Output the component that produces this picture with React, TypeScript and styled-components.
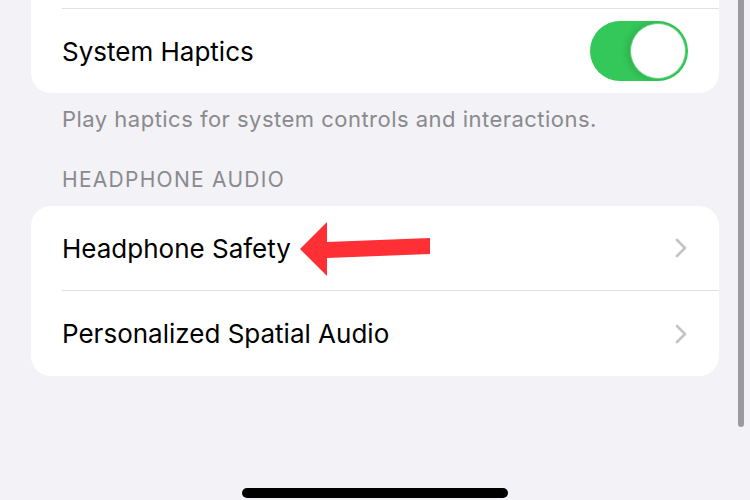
import styled, { createGlobalStyle } from 'styled-components';

const GlobalStyle = createGlobalStyle`
  html, body {
    margin: 0;
    padding: 0;
    background: #f2f2f7;
    overflow: hidden;
  }
  body {
    font-family: Inter, "Liberation Sans", sans-serif;
    -webkit-font-smoothing: antialiased;
  }
`;

const Screen = styled.div`
  position: relative;
  width: 750px;
  height: 500px;
  overflow: hidden;
  background: #f2f2f7;
`;

const Content = styled.div`
  display: flex;
  flex-direction: column;
  padding: 0 31px;
  margin-top: -40px;
`;

const Card = styled.div<{ $gap?: number }>`
  background: #ffffff;
  border-radius: 20px;
  overflow: hidden;
  margin-top: ${(p) => p.$gap ?? 0}px;
`;

const Row = styled.div<{ $height: number }>`
  display: flex;
  align-items: center;
  justify-content: space-between;
  height: ${(p) => p.$height}px;
  padding: 0 31px;
  box-sizing: border-box;
`;

const Separator = styled.div`
  height: 1px;
  margin-left: 31px;
  background: #e1e1e4;
`;

const Label = styled.span`
  font-size: 26px;
  color: #000000;
  letter-spacing: 0;
`;

const Footer = styled.div`
  margin-top: 10px;
  padding-left: 31px;
  font-size: 22px;
  line-height: 32px;
  color: #8a8a8e;
  letter-spacing: 0.48px;
`;

const SectionHeader = styled.div`
  margin-top: 31px;
  padding-left: 31px;
  font-size: 21px;
  line-height: 28px;
  color: #8a8a8e;
  letter-spacing: 1.28px;
  text-transform: uppercase;
`;

const Toggle = styled.div`
  position: relative;
  width: 98px;
  height: 60px;
  border-radius: 30px;
  background: #34c759;
  flex-shrink: 0;
`;

const Knob = styled.div`
  position: absolute;
  top: 2px;
  right: 2px;
  width: 56px;
  height: 56px;
  box-sizing: border-box;
  border-radius: 50%;
  background: #ffffff;
  border: 1px solid #5fd37d;
  box-shadow: -3px 0 6px rgba(0, 0, 0, 0.12);
`;

const ScrollIndicator = styled.div`
  position: absolute;
  top: -10px;
  right: 6px;
  width: 6px;
  height: 437px;
  border-radius: 3px;
  background: #9b9b9d;
`;

const HomeIndicator = styled.div`
  position: absolute;
  bottom: 2px;
  left: 242px;
  width: 266px;
  height: 10px;
  border-radius: 5px;
  background: #000000;
`;

const Annotation = styled.svg`
  position: absolute;
  left: 296px;
  top: 218px;
`;

function Chevron() {
  return (
    <svg width="14" height="20" viewBox="0 0 14 20">
      <polyline
        points="3,2 11,10 3,18"
        fill="none"
        stroke="#c4c4c7"
        strokeWidth="2.6"
        strokeLinecap="round"
        strokeLinejoin="round"
      />
    </svg>
  );
}

function App() {
  return (
    <Screen>
      <GlobalStyle />
      <Content>
        <Card>
          <Row $height={48} />
          <Separator />
          <Row $height={84}>
            <Label>System Haptics</Label>
            <Toggle>
              <Knob />
            </Toggle>
          </Row>
        </Card>
        <Footer>Play haptics for system controls and interactions.</Footer>
        <SectionHeader>Headphone Audio</SectionHeader>
        <Card $gap={12}>
          <Row $height={84}>
            <Label>Headphone Safety</Label>
            <Chevron />
          </Row>
          <Separator />
          <Row $height={85}>
            <Label>Personalized Spatial Audio</Label>
            <Chevron />
          </Row>
        </Card>
      </Content>
      <Annotation width="140" height="62" viewBox="296 218 140 62">
        <polygon
          points="300,249 327,222 327,242 430,238 430,254 327,258 327,276"
          fill="#fe3036"
        />
      </Annotation>
      <ScrollIndicator />
      <HomeIndicator />
    </Screen>
  );
}

export default App;
